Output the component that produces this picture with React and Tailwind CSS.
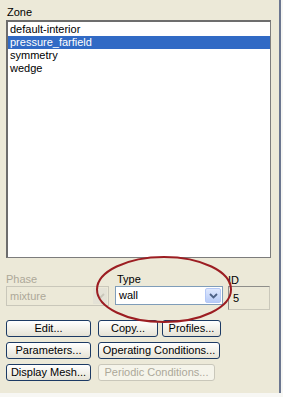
import React from 'react';

const zones = ['default-interior', 'pressure_farfield', 'symmetry', 'wedge'];

const XpButton = ({ label, width, disabled }) => (
    <div
        className={`h-[17px] flex items-center justify-center rounded-[3px] border text-[11px] leading-none ${
            disabled
                ? 'border-[#c9c7ba] text-[#aca899] bg-[#f5f4ea]'
                : 'border-[#1c3a64] text-black bg-gradient-to-b from-white to-[#e6e3d6]'
        }`}
        style={{ width }}
    >
        {label}
    </div>
);

const Chevron = ({ color }) => (
    <svg width="9" height="6" viewBox="0 0 9 6">
        <path d="M1 1 L4.5 4.5 L8 1" fill="none" stroke={color} strokeWidth="1.8" />
    </svg>
);

export default function App() {
    return (
        <div className="w-[283px] h-[397px] bg-[#f7f7f4] flex overflow-hidden" style={{ fontFamily: '"Liberation Sans", Arial, sans-serif' }}>
            <div className="relative w-[279px] h-[393px] bg-[#ece9d8] pt-[5px] pl-[6px]">
                {/* Zone list */}
                <div className="h-[14px] leading-[14px] text-[11px] text-black pl-[1px]">Zone</div>
                <div className="mt-[1px] w-[265px] h-[238px] bg-white border border-[#7c7c7c] border-l-[2px] border-t-[2px] border-l-[#6d6d6d] border-t-[#6d6d6d] pt-[1px]">
                    {zones.map((z) => (
                        <div
                            key={z}
                            className={`h-[13px] leading-[13px] text-[11px] pl-[2px] ${
                                z === 'pressure_farfield' ? 'bg-[#316ac5] text-white' : 'text-black'
                            }`}
                        >
                            {z}
                        </div>
                    ))}
                </div>

                {/* Phase / Type / ID */}
                <div className="mt-[14px] flex items-start">
                    <div className="w-[103px]">
                        <div className="h-[14px] leading-[14px] text-[11px] text-[#aca899]">Phase</div>
                        <div className="h-[20px] border border-[#c9c7ba] bg-[#ece9d8] flex items-center">
                            <span className="flex-1 pl-[3px] text-[11px] text-[#aca899]">mixture</span>
                            <div className="w-[14px] h-[16px] mr-[1px] bg-[#e4e2d6] flex items-center justify-center">
                                <Chevron color="#c9c7ba" />
                            </div>
                        </div>
                    </div>
                    <div className="w-[108px] ml-[6px]">
                        <div className="h-[14px] leading-[14px] text-[11px] text-black pl-[2px]">Type</div>
                        <div className="h-[19px] border border-[#7f9db9] bg-white flex items-center">
                            <span className="flex-1 pl-[3px] text-[11px] text-black">wall</span>
                            <div className="w-[16px] h-[15px] mr-[1px] rounded-[2px] border border-[#b4c8f6] bg-gradient-to-b from-[#dfe8fd] to-[#b7cbf7] flex items-center justify-center">
                                <Chevron color="#4d6185" />
                            </div>
                        </div>
                    </div>
                    <div className="w-[42px] ml-[5px]">
                        <div className="h-[14px] leading-[16px] text-[11px] text-black">ID</div>
                        <div className="h-[24px] border border-[#8e8e8a] border-b-[#c9c7ba] border-r-[#c9c7ba] bg-[#ece9d8] pl-[4px] pt-[3px] text-[11px] text-black">
                            5
                        </div>
                    </div>
                </div>

                {/* Buttons */}
                <div className="mt-[10px] flex flex-col gap-[5px]">
                    <div className="flex">
                        <XpButton label="Edit..." width={85} />
                        <div className="ml-[7px]"><XpButton label="Copy..." width={60} /></div>
                        <div className="ml-[4px]"><XpButton label="Profiles..." width={59} /></div>
                    </div>
                    <div className="flex">
                        <XpButton label="Parameters..." width={85} />
                        <div className="ml-[7px]"><XpButton label="Operating Conditions..." width={122} /></div>
                    </div>
                    <div className="flex">
                        <XpButton label="Display Mesh..." width={85} />
                        <div className="ml-[7px]"><XpButton label="Periodic Conditions..." width={117} disabled /></div>
                    </div>
                </div>

                {/* red annotation ellipse */}
                <svg className="absolute left-[94px] top-[254px] pointer-events-none" width="142" height="72" viewBox="0 0 142 72">
                    <ellipse cx="70" cy="35.5" rx="67" ry="32.5" fill="none" stroke="#9c1d22" strokeWidth="2" />
                </svg>
            </div>
            <div className="w-[2px] h-[393px] bg-[#6b7690]" />
        </div>
    );
}
